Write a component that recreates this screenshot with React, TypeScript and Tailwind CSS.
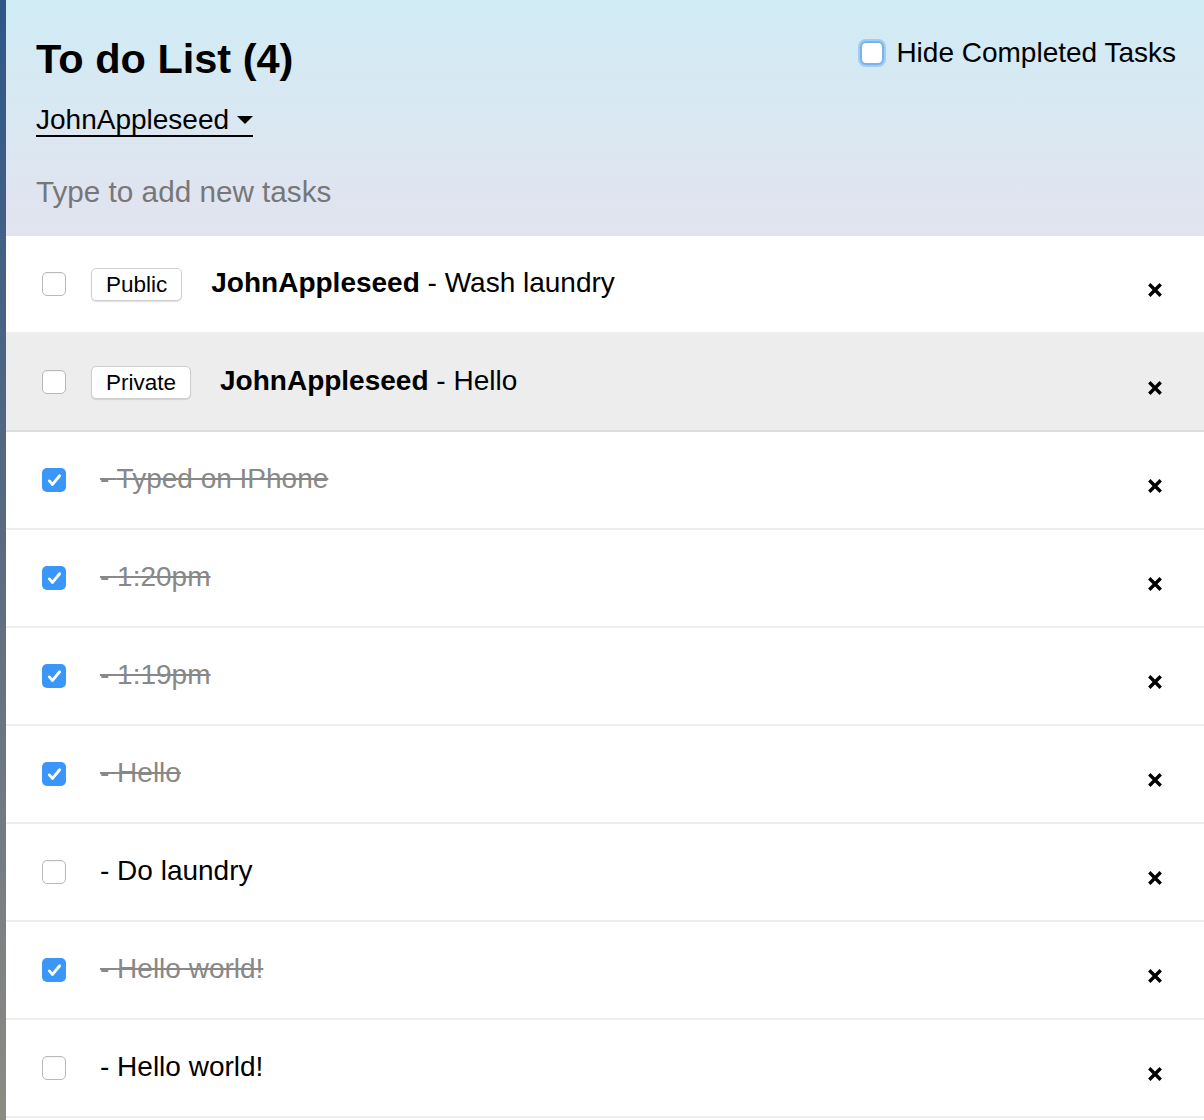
const tasks = [
  { id: 1, owner: 'JohnAppleseed', text: 'Wash laundry', tag: 'Public', checked: false },
  { id: 2, owner: 'JohnAppleseed', text: 'Hello', tag: 'Private', checked: false, highlight: true },
  { id: 3, text: 'Typed on IPhone', checked: true },
  { id: 4, text: '1:20pm', checked: true },
  { id: 5, text: '1:19pm', checked: true },
  { id: 6, text: 'Hello', checked: true },
  { id: 7, text: 'Do laundry', checked: false },
  { id: 8, text: 'Hello world!', checked: true },
  { id: 9, text: 'Hello world!', checked: false },
];

function Box({ checked }: { checked: boolean }) {
  if (checked) {
    return (
      <span className="flex h-[24px] w-[24px] shrink-0 items-center justify-center rounded-[5px] bg-[#3a97f9]">
        <svg viewBox="0 0 24 24" className="h-[19px] w-[19px]" fill="none" stroke="white" strokeWidth="3.6" strokeLinecap="round" strokeLinejoin="round">
          <path d="M5.5 12.5l4 4.5L18.5 6" />
        </svg>
      </span>
    );
  }
  return (
    <span className="block h-[24px] w-[24px] shrink-0 rounded-[5px] border border-[#b9b9b9] bg-white shadow-[inset_0_1px_1px_rgba(0,0,0,0.05)]" />
  );
}

function Cross() {
  return (
    <svg viewBox="0 0 14 14" className="mt-[11px] h-[14px] w-[14px]" fill="none" stroke="black" strokeWidth="3.4" strokeLinecap="square">
      <path d="M2.5 2.5l9 9M11.5 2.5l-9 9" />
    </svg>
  );
}

export default function App() {
  return (
    <div className="flex min-h-[1120px] bg-white font-['Liberation_Sans',Arial,sans-serif] text-black">
      <div className="w-[6px] shrink-0 bg-gradient-to-b from-[#2d5789] via-[#5b6b80] to-[#8d8c83]" />
      <div className="flex-1">
        <header className="h-[236px] bg-gradient-to-b from-[#d0ecf5] to-[#e2e3ef] pl-[30px] pr-[28px]">
          <div className="flex items-start justify-between">
            <h1 className="mt-[38px] text-[41.5px] font-bold leading-none">To do List (4)</h1>
            <label className="mt-[38px] flex items-center gap-[12px] text-[28px] leading-none">
              <span className="block h-[24px] w-[24px] rounded-[6px] border-2 border-[#79b3ee] bg-white shadow-[0_0_0_2px_rgba(120,178,240,0.55)]" />
              <span className="mt-[1px]">Hide Completed Tasks</span>
            </label>
          </div>
          <div className="mt-[26px] inline-flex items-center gap-[8px] border-b-2 border-black pb-[1px] text-[28px] leading-none">
            <span>JohnAppleseed</span>
            <svg viewBox="0 0 16 8" className="h-[8px] w-[16px]">
              <path d="M0 0h16L8 8z" fill="black" />
            </svg>
          </div>
          <div className="mt-[40px] text-[29.7px] leading-none text-[#777777]">Type to add new tasks</div>
        </header>
        <ul>
          {tasks.map((t) => (
            <li
              key={t.id}
              className={
                'flex h-[98px] items-center border-b-2 pl-[36px] pr-[42px] ' +
                (t.highlight ? 'border-[#dcdcdc] bg-[#ededed]' : 'border-[#eeeeee] bg-white')
              }
            >
              <Box checked={t.checked} />
              {t.tag && (
                <span className="ml-[25px] rounded-[5px] border border-[#cfcfcf] bg-white px-[14px] py-[4px] text-[22.5px] leading-[23px] shadow-[0_1px_1px_rgba(0,0,0,0.12)]">
                  {t.tag}
                </span>
              )}
              <span
                className={
                  'mb-[2px] flex-1 text-[28px] ' +
                  (t.tag ? 'ml-[29px] ' : 'ml-[34px] ') +
                  (t.checked ? 'text-[#888888] line-through' : '')
                }
              >
                {t.owner && <strong className="font-bold">{t.owner}</strong>} - {t.text}
              </span>
              <Cross />
            </li>
          ))}
        </ul>
      </div>
    </div>
  );
}
